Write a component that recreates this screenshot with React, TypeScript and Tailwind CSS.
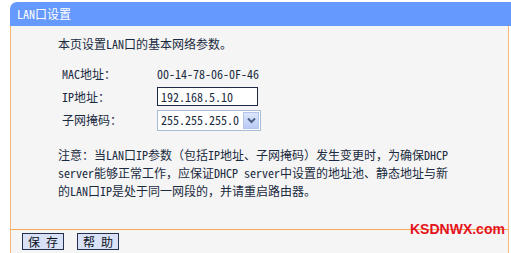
import React from "react";

const F = { fontFamily: '"Noto Sans Mono CJK SC", "Noto Sans CJK SC", monospace' };

export default function App() {
  return (
    <div className="w-[511px] h-[253px] bg-white overflow-hidden relative text-[12px] text-[#1a2a40]" style={F}>
      <div className="ml-[10px] mt-[2px]">
        <div className="h-[24px] bg-[#6699fc] rounded-tl-[7px] text-white flex items-center pl-[7px] leading-none">
          LAN口设置
        </div>
        <div className="w-[499px] bg-[#f5f5f5] border-l border-r border-[#f7b877] h-[227px] flex flex-col">
          <div className="pl-[47px] pt-[9px] leading-[18px]">本页设置LAN口的基本网络参数。</div>
          <div className="mt-[9px] flex flex-col">
            <div className="h-[23px] flex items-center">
              <div className="w-[146px] pl-[51px]">MAC地址：</div>
              <div>00-14-78-06-0F-46</div>
            </div>
            <div className="h-[23px] flex items-center">
              <div className="w-[146px] pl-[51px]">IP地址：</div>
              <div className="w-[101px] h-[19px] border border-[#1c2a44] bg-white flex items-center pl-[3px] leading-none">192.168.5.10</div>
            </div>
            <div className="h-[24px] flex items-center">
              <div className="w-[146px] pl-[51px]">子网掩码：</div>
              <div className="w-[104px] h-[21px] border border-[#a7bad6] bg-white flex items-center pl-[3px] pr-[1px] leading-none">
                <span className="flex-1">255.255.255.0</span>
                <span className="w-[16px] h-[17px] bg-gradient-to-b from-[#dce6fb] to-[#b8cbf3] border border-[#b3c5ec] flex items-center justify-center">
                  <svg width="9" height="7" viewBox="0 0 9 7">
                    <path d="M1 1.5 L4.5 5 L8 1.5" fill="none" stroke="#4d6185" strokeWidth="2" />
                  </svg>
                </span>
              </div>
            </div>
          </div>
          <div className="pl-[47px] mt-[14px] leading-[18px]">
            <div>注意：当LAN口IP参数（包括IP地址、子网掩码）发生变更时，为确保DHCP</div>
            <div>server能够正常工作，应保证DHCP server中设置的地址池、静态地址与新</div>
            <div>的LAN口IP是处于同一网段的，并请重启路由器。</div>
          </div>
          <div className="mt-[29px] border-t border-[#f5a75a]" />
          <div className="flex gap-[13px] pl-[11px] pt-[3px]">
            <button className="w-[42px] h-[17px] bg-[#d9e1f7] border border-[#23304f] flex items-center justify-center leading-none text-[#0a1020]" style={F}>保 存</button>
            <button className="w-[42px] h-[17px] bg-[#d9e1f7] border border-[#23304f] flex items-center justify-center leading-none text-[#0a1020]" style={F}>帮 助</button>
          </div>
        </div>
      </div>
      <div className="absolute left-[410px] top-[222px] text-[#e3141e] text-[14px] font-bold leading-none" style={{ fontFamily: '"Liberation Sans", Arial, sans-serif' }}>
        KSDNWX.com
      </div>
    </div>
  );
}
